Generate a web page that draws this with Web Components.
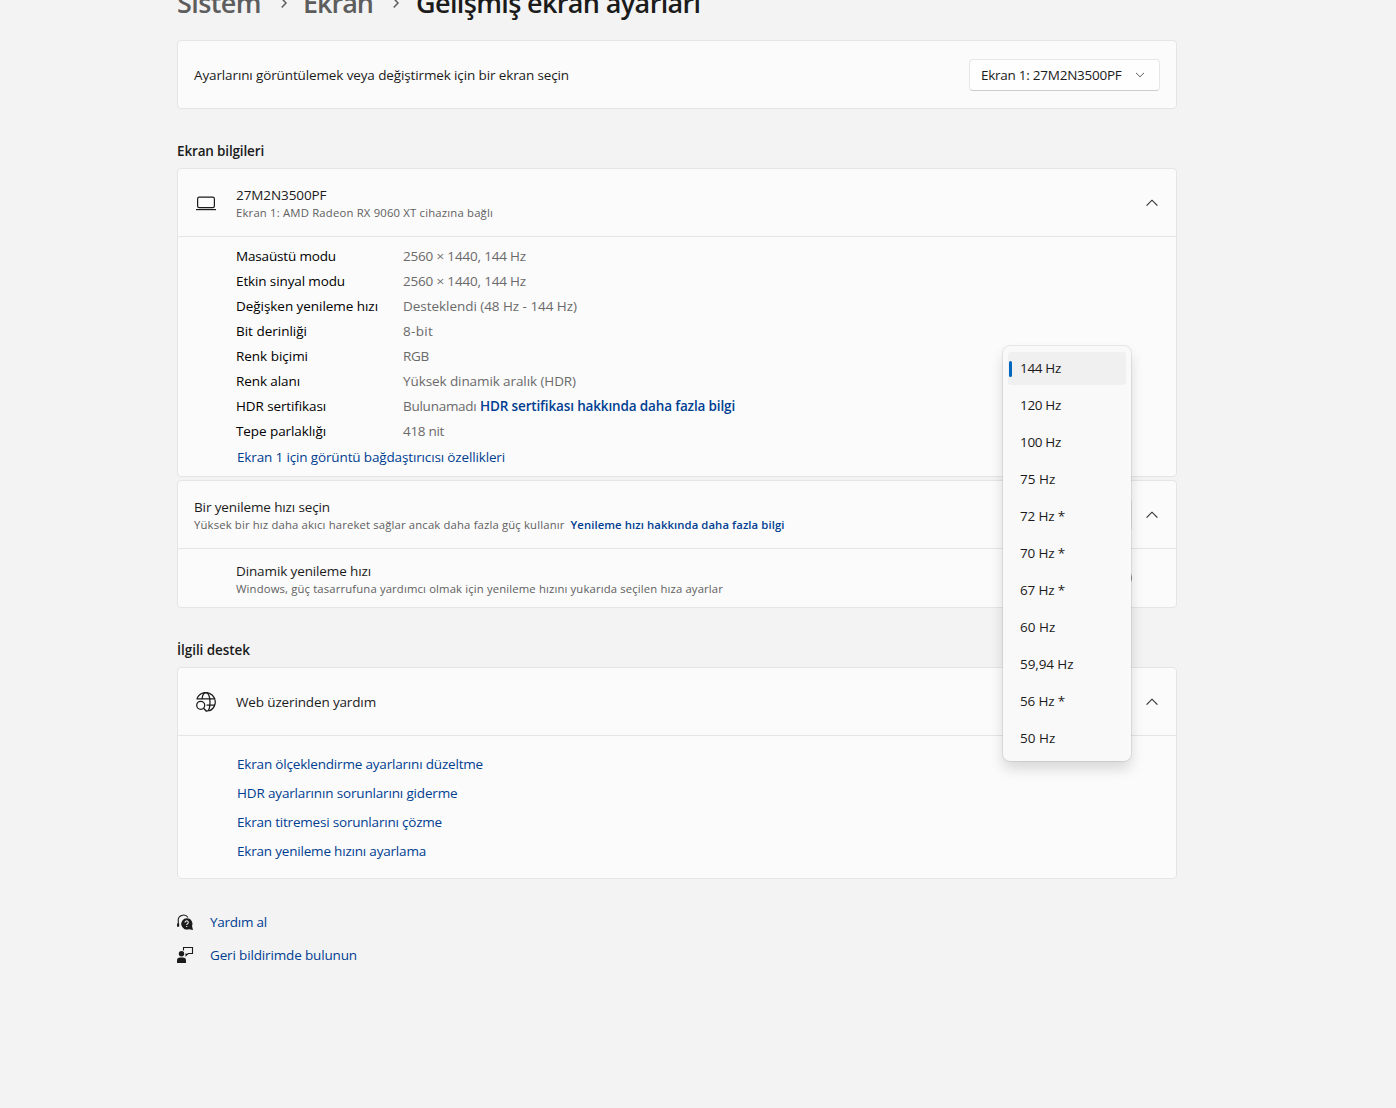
<!DOCTYPE html>
<html lang="tr">
<head>
<meta charset="utf-8">
<title>Gelişmiş ekran ayarları</title>
<style>
    body {
        margin: 0;
        background: #f3f3f3;
        color: #1b1b1b;
        font: 13.5px/18px "Open Sans", "Noto Sans", sans-serif;
        height: 1108px;
        overflow: hidden;
    }
</style>
</head>
<body>
<ayar-sayfasi></ayar-sayfasi>

<script>
const IKONLAR = {
    asagi: `<svg width="10" height="6" viewBox="0 0 10 6"><path d="M1 .9 5 4.8 9 .9" fill="none" stroke="#5c5c5c" stroke-width="1"/></svg>`,
    yukari: `<svg width="12" height="8" viewBox="0 0 12 8"><path d="M.6 6.7 6 1.2 11.4 6.7" fill="none" stroke="#2a2a2a" stroke-width="1.15"/></svg>`,
    sag: `<svg width="10" height="14" viewBox="0 0 10 14"><path d="M2.700 2.500 7 7 2.700 11.500" fill="none" stroke="#5d5d5d" stroke-width="1.500"/></svg>`,
    ekran: `<svg width="20" height="20" viewBox="0 0 20 20"><rect x="1.6" y="4.2" width="16.8" height="10.4" rx="1.7" fill="none" stroke="#1b1b1b" stroke-width="1.2"/><path d="M0 16.600H20" stroke="#1b1b1b" stroke-width="1.2"/></svg>`,
    web: `<svg width="20" height="20" viewBox="0 0 20 20" fill="none" stroke="#1b1b1b" stroke-width="1.25">
        <path d="M.8 7.4A9.4 9.4 0 1 1 12.6 19"/>
        <path d="M1.2 6.8H18.8M10.5 13.2H18.8"/>
        <path d="M6 7.2C6.4 3.3 8 .6 10 .6c2.300 0 4 4.200 4 9.400 0 5-1.300 8.600-2.800 9.300"/>
        <circle cx="4.700" cy="13.300" r="4"/>
        <path d="M7.500 16.200 10.800 19.600" stroke-width="1.400"/>
    </svg>`,
    yardim: `<svg width="17" height="17" viewBox="0 0 17 17">
        <path d="M1.300 11.200V7.200A5.300 5.300 0 0 1 11 3.500" fill="none" stroke="#1b1b1b" stroke-width="1.100"/>
        <path d="M0 9.500h2.200v3.200H0z" fill="#1b1b1b"/>
        <path d="M9.700 4.200a5.700 5.700 0 0 1 5.300 7.900l1 4-4-.9A5.700 5.700 0 1 1 9.700 4.200z" fill="#1b1b1b"/>
        <path d="M8.100 8.600a1.600 1.600 0 1 1 2.500 1.200q-.9.5-.9 1.200M9.700 12v1" fill="none" stroke="#f3f3f3" stroke-width="1.100"/>
    </svg>`,
    geri: `<svg width="17" height="17" viewBox="0 0 17 17">
        <circle cx="4.500" cy="6.700" r="2.700" fill="#1b1b1b"/>
        <path d="M0 16v-2.500Q0 10.500 3 10.500h3q3 0 3 3V16z" fill="#1b1b1b"/>
        <path d="M6.500 3.500v-3h9v6h-4.300l-2.200 2V6.500" fill="none" stroke="#1b1b1b" stroke-width="1.100"/>
    </svg>`
};

// Text with a set advance width: the difference is spread over the letters
class OlculuMetin extends HTMLElement {
    connectedCallback() {
        const shadow = this.attachShadow({ mode: "open" });
        shadow.innerHTML = `
            <style>
                :host { display: inline-block; white-space: nowrap; }
            </style>
            <slot></slot>
        `;
        const w = Number(this.getAttribute("w"));
        if (w) {
            const fark = w - this.getBoundingClientRect().width;
            this.style.letterSpacing = (fark / this.textContent.length) + "px";
        }
    }
}

class IkonSekli extends HTMLElement {
    connectedCallback() {
        this.attachShadow({ mode: "open" }).innerHTML = `
            <style>
                :host { display: block; flex: none; }
                svg { display: block; }
            </style>
            ${IKONLAR[this.getAttribute("ad")]}
        `;
    }
}

class AyarKarti extends HTMLElement {
    connectedCallback() {
        const ikon = this.getAttribute("ikon");
        const acik = this.hasAttribute("acik");
        this.attachShadow({ mode: "open" }).innerHTML = `
            <style>
                :host {
                    display: block;
                    box-sizing: border-box;
                    background: #fbfbfb;
                    border: 1px solid #e5e5e5;
                    border-radius: 4px;
                }
                .ust {
                    display: flex;
                    align-items: center;
                    height: 67px;
                    padding: 0 16px;
                }
                .ust.acik { padding-right: 18px; border-bottom: 1px solid #e5e5e5; }
                .ust > ikon-sekli[ad="${ikon}"] { margin: 0 20px 0 2px; }
                .baslik { flex: 1; }
            </style>
            <div class="ust ${acik ? "acik" : ""}">
                ${ikon ? `<ikon-sekli ad="${ikon}"></ikon-sekli>` : ""}
                <div class="baslik"><slot name="baslik"></slot></div>
                <slot name="sag"></slot>
                ${acik ? `<ikon-sekli ad="yukari"></ikon-sekli>` : ""}
            </div>
            <slot></slot>
        `;
    }
}

class SecimKutusu extends HTMLElement {
    connectedCallback() {
        this.attachShadow({ mode: "open" }).innerHTML = `
            <style>
                :host {
                    display: flex;
                    align-items: center;
                    justify-content: space-between;
                    box-sizing: border-box;
                    height: 32px;
                    padding: 0 14px 0 11px;
                    background: #fefefe;
                    border: 1px solid #e7e7e7;
                    border-bottom-color: #cdcdcd;
                    border-radius: 4px;
                }
            </style>
            <slot></slot>
            <ikon-sekli ad="asagi"></ikon-sekli>
        `;
    }
}

class BilgiSatiri extends HTMLElement {
    connectedCallback() {
        this.attachShadow({ mode: "open" }).innerHTML = `
            <style>
                :host {
                    display: grid;
                    grid-template-columns: 167px 1fr;
                    align-items: center;
                    justify-items: start;
                    height: 25px;
                    color: #000;
                }
                .deger { color: #6a6a6a; }
            </style>
            <olculu-metin w="${this.getAttribute("w")}">${this.getAttribute("etiket")}</olculu-metin>
            <div class="deger"><slot></slot></div>
        `;
    }
}

class HizMenusu extends HTMLElement {
    constructor() {
        super();
        this.shadow = this.attachShadow({ mode: "open" });
        this.hizlar = [
            ["144 Hz", 41], ["120 Hz", 41], ["100 Hz", 41], ["75 Hz", 35.5],
            ["72 Hz *", 45], ["70 Hz *", 45], ["67 Hz *", 45], ["60 Hz", 35.5],
            ["59,94 Hz", 53.5], ["56 Hz *", 45], ["50 Hz", 35.5]
        ];
    }

    connectedCallback() {
        this.shadow.innerHTML = `
            <style>
                :host {
                    position: absolute;
                    left: 1003px;
                    top: 346px;
                    width: 128px;
                    box-sizing: border-box;
                    padding: 6px 5px;
                    display: flex;
                    flex-direction: column;
                    gap: 4px;
                    background: #f9f9f9;
                    border-radius: 7px;
                    box-shadow: 0 0 0 1px rgba(0, 0, 0, .07), 0 8px 14px rgba(0, 0, 0, .14);
                }
                .hiz {
                    position: relative;
                    height: 33px;
                    line-height: 33px;
                    padding-left: 12px;
                    border-radius: 3px;
                }
                .secili { background: #f0f0f0; }
                .secili::before {
                    content: "";
                    position: absolute;
                    left: 1px;
                    top: 9px;
                    width: 3px;
                    height: 16px;
                    border-radius: 1.5px;
                    background: #0067c0;
                }
            </style>
            ${this.hizlar.map(([hiz, w], i) => `
                <div class="hiz ${i == 0 ? "secili" : ""}"><olculu-metin w="${w}">${hiz}</olculu-metin></div>
            `).join("")}
        `;
    }
}

class AyarSayfasi extends HTMLElement {
    connectedCallback() {
        this.attachShadow({ mode: "open" }).innerHTML = `
            <style>
                :host { display: block; width: 1000px; margin-left: 177px; }
                .yol {
                    display: flex;
                    align-items: center;
                    height: 36px;
                    margin-top: -15px;
                    font-size: 27px;
                    line-height: 36px;
                    font-weight: 600;
                    color: #5d5d5d;
                }
                .yol ikon-sekli { margin: 0 14px 0 18px; }
                .yol .son { color: #1b1b1b; margin-left: 1px; }
                .ilk { margin-top: 19px; }
                h2 { margin: 33px 0 8px; font-size: 13.5px; line-height: 18px; font-weight: 600; }
                olculu-metin { display: block; width: max-content; }
                .kucuk { font-size: 11.3px; line-height: 17px; color: #606060; }
                .baglanti { color: #003e92; }
                .kalin { font-weight: 600; }
                .yan { display: flex; }
                .cift { padding-top: 2px; }
                .bilgi { padding: 6px 16px 7px 58px; }
                .bilgi > .baglanti { margin-left: 1px; line-height: 28px; margin-bottom: -2px; }
                .dinamik {
                    display: flex;
                    align-items: center;
                    justify-content: space-between;
                    height: 58px;
                    padding: 0 44px 0 58px;
                }
                .anahtar {
                    box-sizing: border-box;
                    width: 40px;
                    height: 20px;
                    border: 1px solid #868686;
                    border-radius: 10px;
                }
                .yardimlar { padding: 14px 0 12px 59px; line-height: 29px; }
                .alt { margin-top: 27px; }
                .alt > div { display: flex; align-items: center; gap: 16px; height: 33px; }
                .alt olculu-metin { padding-bottom: 2px; }
            </style>
            <div class="yol">
                <olculu-metin w="84">Sistem</olculu-metin>
                <ikon-sekli ad="sag"></ikon-sekli>
                <olculu-metin w="70">Ekran</olculu-metin>
                <ikon-sekli ad="sag"></ikon-sekli>
                <olculu-metin w="284.5" class="son">Gelişmiş ekran ayarları</olculu-metin>
            </div>

            <ayar-karti class="ilk">
                <olculu-metin slot="baslik" w="375">Ayarlarını görüntülemek veya değiştirmek için bir ekran seçin</olculu-metin>
                <secim-kutusu slot="sag" style="width: 191px"><olculu-metin w="140.5">Ekran 1: 27M2N3500PF</olculu-metin></secim-kutusu>
            </ayar-karti>

            <h2><olculu-metin w="87">Ekran bilgileri</olculu-metin></h2>
            <ayar-karti ikon="ekran" acik>
                <div slot="baslik" class="cift">
                    <olculu-metin w="90.5">27M2N3500PF</olculu-metin>
                    <olculu-metin w="257" class="kucuk">Ekran 1: AMD Radeon RX 9060 XT cihazına bağlı</olculu-metin>
                </div>
                <div class="bilgi">
                    <bilgi-satiri etiket="Masaüstü modu" w="100"><olculu-metin w="123">2560 × 1440, 144 Hz</olculu-metin></bilgi-satiri>
                    <bilgi-satiri etiket="Etkin sinyal modu" w="109"><olculu-metin w="123">2560 × 1440, 144 Hz</olculu-metin></bilgi-satiri>
                    <bilgi-satiri etiket="Değişken yenileme hızı" w="142"><olculu-metin w="174">Desteklendi (48 Hz - 144 Hz)</olculu-metin></bilgi-satiri>
                    <bilgi-satiri etiket="Bit derinliği" w="71"><olculu-metin w="30">8-bit</olculu-metin></bilgi-satiri>
                    <bilgi-satiri etiket="Renk biçimi" w="72"><olculu-metin w="26">RGB</olculu-metin></bilgi-satiri>
                    <bilgi-satiri etiket="Renk alanı" w="64"><olculu-metin w="173">Yüksek dinamik aralık (HDR)</olculu-metin></bilgi-satiri>
                    <bilgi-satiri etiket="HDR sertifikası" w="90"><div class="yan"><olculu-metin w="73.5" style="margin-right: 3.5px">Bulunamadı</olculu-metin><olculu-metin w="255" class="baglanti kalin">HDR sertifikası hakkında daha fazla bilgi</olculu-metin></div></bilgi-satiri>
                    <bilgi-satiri etiket="Tepe parlaklığı" w="90"><olculu-metin w="41">418 nit</olculu-metin></bilgi-satiri>
                    <olculu-metin w="268" class="baglanti">Ekran 1 için görüntü bağdaştırıcısı özellikleri</olculu-metin>
                </div>
            </ayar-karti>

            <ayar-karti acik style="margin-top: 3px">
                <div slot="baslik" class="cift">
                    <olculu-metin w="136">Bir yenileme hızı seçin</olculu-metin>
                    <div class="kucuk yan">
                        <olculu-metin w="370.5" style="margin-right: 6px">Yüksek bir hız daha akıcı hareket sağlar ancak daha fazla güç kullanır</olculu-metin>
                        <olculu-metin w="214" class="baglanti kalin">Yenileme hızı hakkında daha fazla bilgi</olculu-metin>
                    </div>
                </div>
                <secim-kutusu slot="sag" style="width: 120px; margin-right: 14px"></secim-kutusu>
                <div class="dinamik">
                    <div class="cift">
                        <olculu-metin w="135">Dinamik yenileme hızı</olculu-metin>
                        <olculu-metin w="487" class="kucuk">Windows, güç tasarrufuna yardımcı olmak için yenileme hızını yukarıda seçilen hıza ayarlar</olculu-metin>
                    </div>
                    <div class="anahtar"></div>
                </div>
            </ayar-karti>

            <h2><olculu-metin w="73">İlgili destek</olculu-metin></h2>
            <ayar-karti ikon="web" acik>
                <olculu-metin slot="baslik" w="140">Web üzerinden yardım</olculu-metin>
                <div class="yardimlar baglanti">
                    <olculu-metin w="246">Ekran ölçeklendirme ayarlarını düzeltme</olculu-metin>
                    <olculu-metin w="220.5">HDR ayarlarının sorunlarını giderme</olculu-metin>
                    <olculu-metin w="205">Ekran titremesi sorunlarını çözme</olculu-metin>
                    <olculu-metin w="189">Ekran yenileme hızını ayarlama</olculu-metin>
                </div>
            </ayar-karti>

            <div class="alt baglanti">
                <div><ikon-sekli ad="yardim"></ikon-sekli><olculu-metin w="57">Yardım al</olculu-metin></div>
                <div><ikon-sekli ad="geri"></ikon-sekli><olculu-metin w="147">Geri bildirimde bulunun</olculu-metin></div>
            </div>

            <hiz-menusu></hiz-menusu>
        `;
    }
}

customElements.define("ikon-sekli", IkonSekli);
customElements.define("ayar-karti", AyarKarti);
customElements.define("secim-kutusu", SecimKutusu);
customElements.define("bilgi-satiri", BilgiSatiri);
customElements.define("hiz-menusu", HizMenusu);
customElements.define("ayar-sayfasi", AyarSayfasi);
// Last, so that every text is in its final place when it is measured
customElements.define("olculu-metin", OlculuMetin);
</script>
</body>
</html>
